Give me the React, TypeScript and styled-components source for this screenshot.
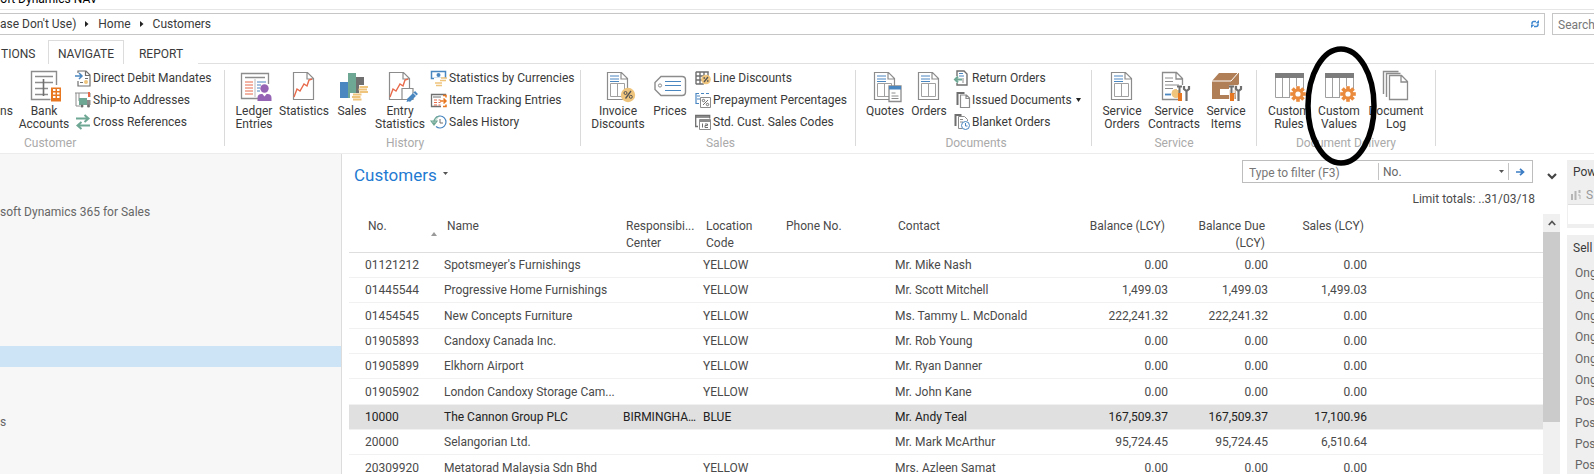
import React from "react";
import styled, { createGlobalStyle } from "styled-components";

const GlobalStyle = createGlobalStyle`
  * { box-sizing: border-box; }
  body { margin: 0; background: #fff; }
  body, button, input, select, table {
    font-family: Roboto, "Open Sans", sans-serif;
    font-size: 12px;
    line-height: 16px;
    color: #4a4a4a;
  }
  button, input, select { border: 0; padding: 0; margin: 0; background: none; outline: none; }
`;

const C = {
  gray: "#8c8c8c",
  dark: "#6f6f6f",
  blue: "#4a86c0",
  orange: "#e87722",
  gear: "#ea8a3c",
  purple: "#9564b4",
  green: "#6fa795",
  gold: "#efc47c",
  red: "#e8694a",
  brown: "#b07f58",
};

/* ---------- page frame ---------- */

const Shell = styled.div`
  height: 100vh;
  display: flex;
  flex-direction: column;
  overflow: hidden;
`;

const TitleBar = styled.header`
  flex: none;
  height: 10px;
  padding-bottom: 2px;
  display: flex;
  align-items: flex-end;
  overflow: hidden;
  border-bottom: 1px solid #e6e6e6;
  color: #000;
  text-indent: -6px;
  white-space: nowrap;
`;

const AddressRow = styled.div`
  flex: none;
  display: flex;
  gap: 7px;
  padding-top: 3px;
`;

const AddressBar = styled.nav`
  flex: 1;
  height: 22px;
  display: flex;
  align-items: center;
  gap: 9px;
  padding-right: 5px;
  border: 1px solid #c6c6c6;
  border-left: 0;
`;

const Crumb = styled.a`
  color: #3a3a3a;
  text-decoration: none;
`;

const CrumbSeparator = styled.svg`
  width: 4px;
  height: 6px;
  margin-right: 0;
`;

const IconButton = styled.button`
  display: flex;
  align-items: center;
  justify-content: center;
`;

const SearchBox = styled.input`
  width: 42px;
  height: 22px;
  padding: 2px 0 0 5px;
  border: 1px solid #c6c6c6;
  border-right: 0;
  &::placeholder { color: #777; opacity: 1; }
`;

const Spacer = styled.div`
  flex: 1;
`;

const TabStrip = styled.div`
  flex: none;
  display: flex;
  align-items: stretch;
  height: 29px;
  padding-top: 5px;
  border-bottom: 1px solid #e0e0e0;
`;

const Tab = styled.button<{ $active?: boolean; $width: number; $start?: boolean }>`
  width: ${(p) => p.$width}px;
  height: 24px;
  text-align: ${(p) => (p.$start ? "left" : "center")};
  color: #3a3a3a;
  background: #fff;
  border: 1px solid ${(p) => (p.$active ? "#dcdcdc" : "transparent")};
  border-bottom: 0;
  padding-top: 2px;
  padding-left: 0;
`;

/* ---------- ribbon ---------- */

const RibbonBar = styled.div`
  flex: none;
  display: flex;
  height: 90px;
  padding-top: 6px;
  border-bottom: 1px solid #ececec;
`;

const Group = styled.section<{ $flush?: boolean; $padEnd?: boolean }>`
  display: flex;
  flex-direction: column;
  height: 76px;
  padding-left: ${(p) => (p.$flush ? 0 : 5)}px;
  padding-right: ${(p) => (p.$padEnd ? 5 : 0)}px;
  border-right: 1px solid #dadada;
`;

const GroupBody = styled.div`
  flex: none;
  display: flex;
  height: 65px;
`;

const GroupTitle = styled.h2<{ $indent?: number }>`
  flex: none;
  margin: 0;
  line-height: 16px;
  font-size: 12px;
  font-weight: 400;
  color: #aaa;
  text-align: ${(p) => (p.$indent ? "left" : "center")};
  padding-left: ${(p) => p.$indent ?? 0}px;
`;

const BigButton = styled.button<{ $width: number }>`
  position: relative;
  width: ${(p) => p.$width}px;
  display: flex;
  flex-direction: column;
  align-items: center;
  color: #3a3a3a;
  line-height: 13px;
  white-space: pre;
  svg { flex: none; overflow: visible; }
`;

const BigLabel = styled.span`
  padding-top: 3px;
`;

const ClippedButton = styled(BigButton)`
  align-items: flex-start;
  padding-top: 35px;
`;

const SmallList = styled.div<{ $width: number }>`
  width: ${(p) => p.$width}px;
  padding-left: 5px;
  display: flex;
  flex-direction: column;
`;

const SmallButton = styled.button`
  flex: none;
  height: 22px;
  display: flex;
  align-items: flex-start;
  gap: 2px;
  color: #3a3a3a;
  line-height: 17px;
  white-space: nowrap;
  svg { flex: none; overflow: visible; }
`;

const MarkRing = styled.svg`
  position: absolute;
  left: -11px;
  top: -24px;
  z-index: 2;
  pointer-events: none;
`;

/* ---------- work area ---------- */

const WorkArea = styled.div`
  flex: 1;
  min-height: 0;
  display: flex;
`;

const Sidebar = styled.aside`
  flex: none;
  width: 342px;
  padding-top: 45px;
  background: #f7f7f7;
  border-right: 1px solid #dcdcdc;
  overflow: hidden;
`;

const NavItem = styled.a<{ $selected?: boolean }>`
  display: block;
  height: 21px;
  line-height: 26px;
  color: #666;
  text-decoration: none;
  background: ${(p) => (p.$selected ? "#cde4f7" : "none")};
`;

const Main = styled.main`
  flex: 1;
  min-width: 0;
  display: flex;
  flex-direction: column;
`;

const PageHead = styled.div`
  flex: none;
  height: 60px;
  display: flex;
  padding: 6px 10px 0 12px;
`;

const PageTitle = styled.h1`
  margin: 0;
  flex: 1;
  display: flex;
  gap: 6px;
  font-size: 17px;
  font-weight: 400;
  line-height: 30px;
  color: #1f7ad1;
  svg { margin-top: 12px; }
`;

const FilterColumn = styled.div`
  display: flex;
  flex-direction: column;
  align-items: flex-end;
`;

const FilterBox = styled.form`
  display: flex;
  align-items: stretch;
  width: 291px;
  height: 23px;
  border: 1px solid #bdbdbd;
`;

const FilterInput = styled.input`
  width: 135px;
  padding: 2px 0 0 6px;
  &::placeholder { color: #777; opacity: 1; }
`;

const FieldPicker = styled.div`
  flex: 1;
  display: flex;
  align-items: center;
  margin: 2px 0;
  border-left: 1px solid #c4c4c4;
  border-right: 1px solid #c4c4c4;
  padding-right: 4px;
`;

const FieldSelect = styled.select`
  flex: 1;
  min-width: 0;
  appearance: none;
  padding-left: 4px;
  color: #666;
`;

const GoButton = styled(IconButton)`
  width: 23px;
`;

const Totals = styled.div`
  padding-top: 8px;
  margin-right: -2px;
`;

const Collapse = styled(IconButton)`
  margin: 7px 0 0 14px;
  height: 18px;
`;

const ListArea = styled.div`
  flex: 1;
  min-height: 0;
  display: flex;
  padding: 0 7px 0 7px;
`;

const TableClip = styled.div`
  flex: 1;
  min-width: 0;
  overflow: hidden;
`;

const Grid = styled.table`
  width: 100%;
  table-layout: fixed;
  border-collapse: separate;
  border-spacing: 0;
`;

const Th = styled.th<{ $right?: boolean; $first?: boolean }>`
  height: 39px;
  vertical-align: top;
  padding: 4px ${(p) => (p.$right ? 8 : 2)}px 0 ${(p) => (p.$first ? 19 : 8)}px;
  font-weight: 400;
  line-height: 17px;
  text-align: ${(p) => (p.$right ? "right" : "left")};
  border-bottom: 1px solid #dedede;
`;

const HeadLine = styled.span`
  display: block;
  overflow: hidden;
  white-space: nowrap;
  text-overflow: ellipsis;
`;

const SortHead = styled.div`
  display: flex;
  justify-content: space-between;
  svg { margin-top: 14px; }
`;

const Row = styled.tr<{ $selected?: boolean }>`
  height: 25px;
  background: ${(p) => (p.$selected ? "#e0e0e0" : "#fff")};
  color: ${(p) => (p.$selected ? "#222" : "#4a4a4a")};
  &:nth-child(3n) { height: 26px; }
`;

const Td = styled.td<{ $right?: boolean; $first?: boolean }>`
  padding: 0 ${(p) => (p.$right ? 5 : 1)}px 0 ${(p) => (p.$first ? 16 : 5)}px;
  text-align: ${(p) => (p.$right ? "right" : "left")};
  border-bottom: 1px solid #f1f1f1;
  overflow: hidden;
  white-space: nowrap;
  text-overflow: ellipsis;
`;

const ScrollTrack = styled.div`
  flex: none;
  width: 17px;
  background: #f0f0f0;
`;

const ScrollUp = styled(IconButton)`
  width: 17px;
  height: 18px;
`;

const ScrollThumb = styled.div`
  height: 190px;
  background: #cbcbcb;
`;

const FactPane = styled.aside`
  flex: none;
  width: 27px;
  padding-top: 6px;
  display: flex;
  flex-direction: column;
  gap: 7px;
  overflow: hidden;
  white-space: nowrap;
`;

const FactBox = styled.section<{ $fill?: boolean }>`
  flex: ${(p) => (p.$fill ? 1 : "none")};
  background: #efefef;
  padding: ${(p) => (p.$fill ? 1 : 0)}px 0 4px 1px;
`;

const FactTitle = styled.h2`
  margin: 0;
  padding-left: 5px;
  font-size: 12px;
  font-weight: 400;
  line-height: 25px;
  color: #3a3a3a;
`;

const FactAction = styled.div`
  display: flex;
  align-items: center;
  gap: 5px;
  height: 19px;
  padding-left: 3px;
  color: #999;
`;

const FactBlank = styled.div`
  height: 20px;
  background: #fff;
  border-top: 1px solid #ddd;
`;

const FactList = styled.ul`
  margin: 0;
  padding: 2px 0 0 7px;
  list-style: none;
  color: #666;
`;

const FactItem = styled.li`
  height: 21px;
  line-height: 21px;
  &:nth-child(3n + 1) { height: 22px; }
`;

/* ---------- icons ---------- */

const Big = ({ children }: { children: React.ReactNode }) => (
  <svg width="32" height="32" viewBox="0 0 32 32" fill="none" aria-hidden="true">{children}</svg>
);
const Small = ({ children }: { children: React.ReactNode }) => (
  <svg width="16" height="16" viewBox="0 0 16 16" fill="none" aria-hidden="true">{children}</svg>
);

const Paper = () => (
  <path d="M5.500 2.500h14l6 6v21h-20zM19 3v6h6" stroke={C.gray} strokeWidth="1.200" fill="#fff" />
);
const OrderPaper = () => (
  <>
    <Paper />
    <path d="M8 6h9M8 9h9M8 11.500h9" stroke={C.blue} strokeWidth="1" />
    <path d="M8.500 13.500h14v13h-14zM15.500 13.500v13" stroke="#a0a0a0" />
  </>
);
const Gear = () => (
  <g transform="translate(25 24)">
    {[0, 45, 90, 135].map((a) => (
      <rect key={a} x="-1.800" y="-7.800" width="3.600" height="15.600" fill={C.gear} transform={`rotate(${a})`} />
    ))}
    <circle r="5.400" fill={C.gear} />
    <circle r="2.600" fill="#fff" />
  </g>
);
const Tools = () => (
  <g>
    <path d="M19 16h5v4h-1v4h1.500v7h-4v-7H21v-4h-2z" fill="#fff" />
    <path d="M19 16.500h5M21.500 17v6" stroke={C.dark} strokeWidth="2" />
    <path d="M20 23h4v8h-4z" fill={C.orange} />
    <path d="M26 16v3l2.500 2 2.500-2v-3M28.500 21v10" stroke={C.dark} strokeWidth="2.200" />
  </g>
);
const Coins = () => (
  <g>
    <path d="M23 15h9v9h-7v7h-11v-8h9z" fill="#fff" />
    <path d="M23.500 17h8.500M22.500 19.500h8.500M23.500 22h8.500M17 24.500h8.500M16 27h8.500M17 29.500h8.500" stroke={C.gold} strokeWidth="2" />
  </g>
);
const ChartLine = () => (
  <path d="M6 27l3-8 3 2 4-7 3 2 2-6 3-1" stroke={C.red} strokeWidth="1.400" />
);

const BankIcon = () => (
  <Big>
    <path d="M28.500 15V1.500h-25v28h19" stroke={C.gray} strokeWidth="1.400" />
    <path d="M7 6.500h18M7 12.500h18M7 18.500h13M7 24.500h13" stroke={C.gray} strokeWidth="1.600" />
    <path d="M15.500 9v17" stroke={C.dark} strokeWidth="1.600" />
    <path d="M23 17.500h10v14h-10z" fill={C.orange} />
    <path d="M25 20h2.500M29 20h2.500M25 23.500h2.500M29 23.500h2.500M25 27h2.500M29 27h2.500" stroke="#fff" strokeWidth="1.800" />
  </Big>
);
const LedgerIcon = () => (
  <Big>
    <path d="M21 28.500H3.500V3.500h27V14" stroke={C.gray} strokeWidth="1.300" />
    <path d="M7 7.500h20" stroke={C.gray} strokeWidth="1.500" />
    <path d="M7 12h8M7 15h8M7 18h8M7 21h8M7 24h8" stroke={C.red} />
    <path d="M17 9v18" stroke="#bbb" />
    <path d="M19 12h9M19 15h4M19 18h3M19 21h3" stroke={C.blue} />
    <circle cx="26.500" cy="18.500" r="4.200" fill={C.purple} />
    <path d="M19.500 31v-3q0-4 4-4h6q4 0 4 4v3z" fill={C.purple} />
    <path d="M24 23.500l2.500 3 2.500-3z" fill="#fff" />
  </Big>
);
const StatisticsIcon = () => <Big><Paper /><ChartLine /></Big>;
const SalesIcon = () => (
  <Big>
    <path d="M4 12h8v16H4z" fill={C.blue} />
    <path d="M20 7h8v16h-8z" fill={C.dark} />
    <path d="M12 3h8v25h-8z" fill={C.green} />
    <Coins />
  </Big>
);
const EntryStatisticsIcon = () => (
  <Big>
    <Paper /><ChartLine />
    <path d="M18 18.500h11v11H18z" stroke={C.gray} strokeWidth="1.200" fill="#fff" />
    <path d="M24.500 30.500l8-8" stroke={C.blue} strokeWidth="4" />
    <path d="M22.500 32l1-3.500 2.500 2.500z" fill={C.blue} />
    <path d="M29.500 23l3 3" stroke="#fff" />
  </Big>
);
const InvoiceIcon = () => (
  <Big>
    <OrderPaper />
    <circle cx="26" cy="25" r="7.200" fill={C.gold} />
    <path d="M23.500 28.500l5.500-7.500" stroke="#555" strokeWidth="1.300" />
    <circle cx="23.500" cy="23" r="1.500" stroke="#555" /><circle cx="28.800" cy="26.800" r="1.500" stroke="#555" />
  </Big>
);
const PricesIcon = () => (
  <Big>
    <path d="M7 6.500h21q3.500 0 3.500 3.500v12q0 3.500-3.500 3.500H7l-6-6v-7z" stroke={C.gray} strokeWidth="1.400" />
    <circle cx="6" cy="15.500" r="1.600" stroke={C.gray} />
    <path d="M11 11.500h16M11 15.500h16M11 20.500h16" stroke={C.blue} strokeWidth="1.200" />
  </Big>
);
const QuotesIcon = () => (
  <Big>
    <OrderPaper />
    <path d="M20 16h12v15.500H20z" fill="#fff" stroke={C.gray} strokeWidth="1.300" />
    <path d="M20 16h12v3.500H20z" fill={C.blue} />
    <path d="M22.500 23h4M22.500 26h7M22.500 28.500h7" stroke={C.gray} />
  </Big>
);
const OrdersIcon = () => <Big><OrderPaper /></Big>;
const ContractsIcon = () => (
  <Big>
    <path d="M20 29.500H4.500v-27h14l6 6V15M18 3v6h6" stroke={C.gray} strokeWidth="1.300" />
    <path d="M7 8h8M7 11.500h8M7 15h14M7 18.500h8" stroke={C.gray} />
    <path d="M7 24.500h6" stroke={C.blue} strokeWidth="1.800" />
    <circle cx="18" cy="23.500" r="4.500" fill={C.gold} />
    <Tools />
  </Big>
);
const ItemsIcon = () => (
  <Big>
    <path d="M2 11l7-8h20v11l-3 3v12H2z" fill={C.brown} />
    <path d="M2 11h19l7-8" stroke="#fff" strokeWidth="1" />
    <path d="M10 19h9v6h-9z" fill="#fff" />
    <path d="M19 15h6v8h-1v9h-5z" fill="#fff" opacity=".8" />
    <path d="M25 15h7v17h-6z" fill="#fff" opacity=".8" />
    <Tools />
  </Big>
);
const CustomIcon = () => (
  <Big>
    <path d="M2.500 7v20.500H17M9.500 7v20M16.500 7v20M23.500 7v9M30.500 7v12" stroke="#a0a0a0" strokeWidth="1" />
    <path d="M2 3h29v5H2z" fill="#7c7c7c" />
    <Gear />
  </Big>
);
const LogIcon = () => (
  <Big>
    <path d="M3.500 24V1.500h15M6.500 27V3.500h14" stroke={C.gray} strokeWidth="1.400" />
    <path d="M9.500 5.500h12l6 6v18h-18zM21 6v6h6" stroke={C.gray} strokeWidth="1.300" fill="#fff" />
  </Big>
);

const DebitIcon = () => (
  <Small>
    <path d="M3 3V1h8l4 4v11H3v-5M10.500 1v4.500H15" stroke={C.dark} strokeWidth="1.200" />
    <path d="M0 6h7M4 3l3 3-3 3" stroke={C.blue} strokeWidth="1.500" />
    <path d="M5 12.500h3M10 8.500h3" stroke={C.dark} /><circle cx="11" cy="12" r="2" fill={C.gold} />
  </Small>
);
const ShipIcon = () => (
  <Small>
    <path d="M0 1h15v4M1 1v13h4M4 1v8" stroke={C.gray} />
    <path d="M13 0h2v5h-2z" fill={C.red} />
    <path d="M4 6h8v7H4z" fill={C.green} /><path d="M12 8h3.500v5H12z" fill={C.gray} />
    <circle cx="7" cy="14" r="1.500" fill={C.dark} /><circle cx="13.500" cy="14" r="1.500" fill={C.dark} />
  </Small>
);
const CrossIcon = () => (
  <Small>
    <path d="M1 4.500h12M9.500 1l4 3.500-4 3.500M15 11.500H3M6.500 8l-4 3.500 4 3.500" stroke={C.green} strokeWidth="2" />
  </Small>
);
const CurrencyIcon = () => (
  <Small>
    <path d="M.5 1.500h14v7H.5z" stroke={C.blue} strokeWidth="1.500" />
    <circle cx="7.500" cy="5" r="2" fill={C.blue} />
    <path d="M3 8h13v8H3z" fill="#fff" />
    <path d="M10 8h6M9 10.500h6M4 13h7M5 15.500h6" stroke={C.gold} strokeWidth="1.600" />
  </Small>
);
const TrackingIcon = () => (
  <Small>
    <path d="M10 14.500H.5v-12h14v1" stroke={C.dark} strokeWidth="1.300" /><path d="M2 5h8" stroke={C.dark} />
    <path d="M3 8h3M3 10.500h3M3 13h3M7.500 8h2M7.500 10.500h2M7.500 13h2" stroke={C.red} strokeWidth="1.200" />
    <path d="M9 9h6M12.500 6.500L15 9l-2.500 2.500M12 3.500h3v2M12 14.500h3v-2" stroke={C.orange} strokeWidth="1.500" />
  </Small>
);
const HistoryIcon = () => (
  <Small>
    <path d="M5 3.500a6 6 0 1 1 0 9" stroke={C.blue} strokeWidth="1.200" />
    <path d="M8.500 2A6 6 0 0 0 3 8v2M0 7l3 4 3-4z" stroke={C.green} strokeWidth="1.200" fill={C.green} fillOpacity=".4" />
    <path d="M9 5v4h3" stroke={C.dark} />
  </Small>
);
const LineDiscountIcon = () => (
  <Small>
    <path d="M.8 2h13M.8 6h12M.8 10h6M.8 14h8M1 2v12M5 2v12M9 2v4M13 2v4" stroke={C.dark} strokeWidth="1.400" />
    <circle cx="11" cy="9.500" r="4.800" fill={C.gold} />
    <path d="M9 12l4-5M8.500 8h1.500M12 11h1.500" stroke="#555" strokeWidth="1.300" />
  </Small>
);
const PrepayIcon = () => (
  <Small>
    <path d="M4 1.500H1v10h3M6 1.500h3M11 1.500h3M2 4h3M2 7h3" stroke={C.blue} strokeWidth="1.200" />
    <path d="M5.500 5.500h10v10h-10z" stroke={C.gray} />
    <path d="M8 13l5-5" stroke={C.dark} /><circle cx="8.500" cy="8.500" r="1.200" stroke={C.dark} /><circle cx="12.500" cy="12.500" r="1.200" stroke={C.dark} />
  </Small>
);
const CodesIcon = () => (
  <Small>
    <path d="M3 12.500H.7V1.500h14v3" stroke={C.dark} strokeWidth="1.300" /><path d="M1 3h13" stroke={C.dark} strokeWidth="1.500" />
    <path d="M4.500 5.500h11v10h-11z" stroke={C.gray} fill="#fff" /><path d="M4.500 7h11" stroke={C.gray} strokeWidth="2" />
    <path d="M7.500 9.500v4M10 10h2.500v1.500H10v2h3" stroke={C.dark} />
  </Small>
);
const ReturnIcon = () => (
  <Small>
    <path d="M3 6V1h7l3 3v11H3v-2" stroke={C.dark} strokeWidth="1.400" />
    <path d="M5 3.500h4M5 6h5" stroke={C.blue} /><path d="M9 8v5" stroke={C.gray} />
    <path d="M8 9.500H1M4 6.500l-3 3 3 3" stroke={C.green} strokeWidth="2" />
  </Small>
);
const IssuedIcon = () => (
  <Small>
    <path d="M3.500 13V1h7" stroke={C.dark} strokeWidth="2" />
    <path d="M6.500 3h6l3 3v9.500h-9zM12 3v3.500h3.500" stroke={C.gray} strokeWidth="1.200" />
  </Small>
);
const BlanketIcon = () => (
  <Small>
    <path d="M1.500 12V1h6" stroke={C.dark} strokeWidth="2" />
    <path d="M4.500 2.500h6l3 3V7M8 14.500H4.500v-12M6 5.500h3M6 8h3" stroke={C.gray} />
    <circle cx="11.500" cy="11.500" r="4" stroke={C.blue} fill="#fff" /><path d="M11.500 9v3h2" stroke={C.blue} />
  </Small>
);

const CrumbArrow = () => (
  <CrumbSeparator viewBox="0 0 4 6" aria-hidden="true"><path d="M0 0l3.500 3L0 6z" fill="#222" /></CrumbSeparator>
);
const Caret = () => (
  <svg width="5" height="3" viewBox="0 0 5 3" aria-hidden="true"><path d="M0 0h5L2.500 3z" fill="#555" /></svg>
);
const MenuCaret = () => (
  <svg width="9" height="16" viewBox="0 0 9 16" aria-hidden="true"><path d="M2 6h5L4.500 10z" fill="#222" /></svg>
);

/* ---------- data ---------- */

type BigDef = { label: string; width: number; icon: React.FC; ring?: boolean };
type SmallDef = { label: string; icon: React.FC; menu?: boolean };
type GroupDef = { title: string; indent?: number; big: BigDef[]; small?: SmallDef[]; smallWidth?: number };

const groups: GroupDef[] = [
  {
    title: "Customer", indent: 24,
    big: [{ label: "Bank\nAccounts", width: 52, icon: BankIcon }],
    smallWidth: 154,
    small: [
      { label: "Direct Debit Mandates", icon: DebitIcon },
      { label: "Ship-to Addresses", icon: ShipIcon },
      { label: "Cross References", icon: CrossIcon },
    ],
  },
  {
    title: "History",
    big: [
      { label: "Ledger\nEntries", width: 48, icon: LedgerIcon },
      { label: "Statistics", width: 52, icon: StatisticsIcon },
      { label: "Sales", width: 44, icon: SalesIcon },
      { label: "Entry\nStatistics", width: 52, icon: EntryStatisticsIcon },
    ],
    smallWidth: 154,
    small: [
      { label: "Statistics by Currencies", icon: CurrencyIcon },
      { label: "Item Tracking Entries", icon: TrackingIcon },
      { label: "Sales History", icon: HistoryIcon },
    ],
  },
  {
    title: "Sales",
    big: [
      { label: "Invoice\nDiscounts", width: 64, icon: InvoiceIcon },
      { label: "Prices", width: 40, icon: PricesIcon },
    ],
    smallWidth: 165,
    small: [
      { label: "Line Discounts", icon: LineDiscountIcon },
      { label: "Prepayment Percentages", icon: PrepayIcon },
      { label: "Std. Cust. Sales Codes", icon: CodesIcon },
    ],
  },
  {
    title: "Documents",
    big: [
      { label: "Quotes", width: 48, icon: QuotesIcon },
      { label: "Orders", width: 40, icon: OrdersIcon },
    ],
    smallWidth: 142,
    small: [
      { label: "Return Orders", icon: ReturnIcon },
      { label: "Issued Documents", icon: IssuedIcon, menu: true },
      { label: "Blanket Orders", icon: BlanketIcon },
    ],
  },
  {
    title: "Service",
    big: [
      { label: "Service\nOrders", width: 50, icon: OrdersIcon },
      { label: "Service\nContracts", width: 54, icon: ContractsIcon },
      { label: "Service\nItems", width: 50, icon: ItemsIcon },
    ],
  },
  {
    title: "Document Delivery",
    big: [
      { label: "Custom\nRules", width: 54, icon: CustomIcon },
      { label: "Custom\nValues", width: 46, icon: CustomIcon, ring: true },
      { label: "Document\nLog", width: 68, icon: LogIcon },
    ],
  },
];

type Customer = { no: string; name: string; center?: string; loc?: string; contact: string; bal: string; due: string; sales: string };

const customers: Customer[] = [
  { no: "01121212", name: "Spotsmeyer's Furnishings", loc: "YELLOW", contact: "Mr. Mike Nash", bal: "0.00", due: "0.00", sales: "0.00" },
  { no: "01445544", name: "Progressive Home Furnishings", loc: "YELLOW", contact: "Mr. Scott Mitchell", bal: "1,499.03", due: "1,499.03", sales: "1,499.03" },
  { no: "01454545", name: "New Concepts Furniture", loc: "YELLOW", contact: "Ms. Tammy L. McDonald", bal: "222,241.32", due: "222,241.32", sales: "0.00" },
  { no: "01905893", name: "Candoxy Canada Inc.", loc: "YELLOW", contact: "Mr. Rob Young", bal: "0.00", due: "0.00", sales: "0.00" },
  { no: "01905899", name: "Elkhorn Airport", loc: "YELLOW", contact: "Mr. Ryan Danner", bal: "0.00", due: "0.00", sales: "0.00" },
  { no: "01905902", name: "London Candoxy Storage Cam...", loc: "YELLOW", contact: "Mr. John Kane", bal: "0.00", due: "0.00", sales: "0.00" },
  { no: "10000", name: "The Cannon Group PLC", center: "BIRMINGHA...", loc: "BLUE", contact: "Mr. Andy Teal", bal: "167,509.37", due: "167,509.37", sales: "17,100.96" },
  { no: "20000", name: "Selangorian Ltd.", contact: "Mr. Mark McArthur", bal: "95,724.45", due: "95,724.45", sales: "6,510.64" },
  { no: "20309920", name: "Metatorad Malaysia Sdn Bhd", loc: "YELLOW", contact: "Mrs. Azleen Samat", bal: "0.00", due: "0.00", sales: "0.00" },
];

const navItems = ["soft Dynamics 365 for Sales", "", "", "", "", "", "", "", "", "", "s"];
const selectedNav = 7;
const facts = ["Ong", "Ong", "Ong", "Ong", "Ong", "Ong", "Pos", "Pos", "Pos", "Pos"];

/* ---------- sections ---------- */

const RibbonGroup = ({ group }: { group: GroupDef }) => (
  <Group $flush={group.indent !== undefined} $padEnd={!group.small}>
    <GroupBody>
      {group.indent !== undefined && <ClippedButton $width={18}>ns</ClippedButton>}
      {group.big.map(({ label, width, icon: Icon, ring }) => (
        <BigButton key={label} $width={width}>
          <Icon />
          <BigLabel>{label}</BigLabel>
          {ring && (
            <MarkRing width="72" height="120" viewBox="0 0 72 120" fill="none" aria-hidden="true">
              <ellipse cx="36" cy="60" rx="33" ry="57" stroke="#000" strokeWidth="5.500" />
            </MarkRing>
          )}
        </BigButton>
      ))}
      {group.small && (
        <SmallList $width={group.smallWidth ?? 150}>
          {group.small.map(({ label, icon: Icon, menu }) => (
            <SmallButton key={label}>
              <Icon />
              <span>{label}</span>
              {menu && <MenuCaret />}
            </SmallButton>
          ))}
        </SmallList>
      )}
    </GroupBody>
    <GroupTitle $indent={group.indent}>{group.title}</GroupTitle>
  </Group>
);

const CustomerTable = () => (
  <Grid>
    <colgroup>
      <col width="90" /><col width="179" /><col width="80" /><col width="80" /><col width="112" />
      <col width="183" /><col width="100" /><col width="100" /><col width="99" /><col />
    </colgroup>
    <thead>
      <tr>
        <Th $first>
          <SortHead>
            No.
            <svg width="6" height="4" viewBox="0 0 6 4" aria-hidden="true"><path d="M0 4h6L3 0z" fill="#999" /></svg>
          </SortHead>
        </Th>
        <Th>Name</Th>
        <Th><HeadLine>Responsibi...</HeadLine><HeadLine>Center</HeadLine></Th>
        <Th>Location Code</Th>
        <Th>Phone No.</Th>
        <Th>Contact</Th>
        <Th $right>Balance (LCY)</Th>
        <Th $right>Balance Due (LCY)</Th>
        <Th $right>Sales (LCY)</Th>
        <Th />
      </tr>
    </thead>
    <tbody>
      {customers.map((c) => (
        <Row key={c.no} $selected={c.no === "10000"}>
          <Td $first>{c.no}</Td>
          <Td>{c.name}</Td>
          <Td>{c.center}</Td>
          <Td>{c.loc}</Td>
          <Td />
          <Td>{c.contact}</Td>
          <Td $right>{c.bal}</Td>
          <Td $right>{c.due}</Td>
          <Td $right>{c.sales}</Td>
          <Td />
        </Row>
      ))}
    </tbody>
  </Grid>
);

export default function App() {
  return (
    <Shell>
      <GlobalStyle />
      <TitleBar>soft Dynamics NAV</TitleBar>
      <AddressRow>
        <AddressBar aria-label="Address">
          <Crumb href="#company">ase Don't Use)</Crumb>
          <CrumbArrow />
          <Crumb href="#home">Home</Crumb>
          <CrumbArrow />
          <Crumb href="#customers">Customers</Crumb>
          <Spacer />
          <IconButton aria-label="Refresh">
            <svg width="8" height="8" viewBox="0 0 8 8" fill="none" aria-hidden="true">
              <path d="M1 4.500V3.200Q1 1.500 2.800 1.500H5M7 3.500v1.300Q7 6.500 5.200 6.500H3" stroke="#3f87cf" strokeWidth="1.500" />
              <path d="M4.500 3.200H8V0zM3.500 4.800H0V8z" fill="#3f87cf" />
            </svg>
          </IconButton>
        </AddressBar>
        <SearchBox aria-label="Search" placeholder="Search" />
      </AddressRow>
      <TabStrip role="tablist">
        <Tab role="tab" $width={48} $start>TIONS</Tab>
        <Tab role="tab" $width={76} $active aria-selected="true">NAVIGATE</Tab>
        <Tab role="tab" $width={74}>REPORT</Tab>
      </TabStrip>
      <RibbonBar>
        {groups.map((g) => <RibbonGroup key={g.title} group={g} />)}
      </RibbonBar>
      <WorkArea>
        <Sidebar>
          {navItems.map((t, i) => (
            <NavItem key={i} href="#nav" $selected={i === selectedNav}>{t}</NavItem>
          ))}
        </Sidebar>
        <Main>
          <PageHead>
            <PageTitle>Customers <Caret /></PageTitle>
            <FilterColumn>
              <FilterBox onSubmit={(e) => e.preventDefault()}>
                <FilterInput aria-label="Filter" placeholder="Type to filter (F3)" />
                <FieldPicker>
                  <FieldSelect aria-label="Filter field"><option>No.</option></FieldSelect>
                  <Caret />
                </FieldPicker>
                <GoButton aria-label="Apply filter">
                  <svg width="9" height="8" viewBox="0 0 9 8" fill="none" aria-hidden="true">
                    <path d="M0 4h7M4 .8L7.500 4 4 7.200" stroke="#3b7cc4" strokeWidth="1.700" />
                  </svg>
                </GoButton>
              </FilterBox>
              <Totals>Limit totals: ..31/03/18</Totals>
            </FilterColumn>
            <Collapse aria-label="Collapse filter pane">
              <svg width="10" height="7" viewBox="0 0 10 7" fill="none" aria-hidden="true">
                <path d="M1 1l4 4 4-4" stroke="#444" strokeWidth="2.200" />
              </svg>
            </Collapse>
          </PageHead>
          <ListArea>
            <TableClip><CustomerTable /></TableClip>
            <ScrollTrack>
              <ScrollUp aria-label="Scroll up">
                <svg width="8" height="6" viewBox="0 0 8 6" fill="none" aria-hidden="true">
                  <path d="M.8 5L4 1.500 7.200 5" stroke="#555" strokeWidth="1.800" />
                </svg>
              </ScrollUp>
              <ScrollThumb />
            </ScrollTrack>
          </ListArea>
        </Main>
        <FactPane>
          <FactBox>
            <FactTitle>Pow</FactTitle>
            <FactAction>
              <svg width="10" height="10" viewBox="0 0 10 10" fill="none" aria-hidden="true">
                <path d="M1 4v6M4.500 1v9M8.500 0v3" stroke="#b5b5b5" strokeWidth="2" />
                <path d="M7 5h2v4" stroke="#b5b5b5" />
              </svg>
              S
            </FactAction>
            <FactBlank />
          </FactBox>
          <FactBox $fill>
            <FactTitle>Sell</FactTitle>
            <FactList>
              {facts.map((f, i) => <FactItem key={i}>{f}</FactItem>)}
            </FactList>
          </FactBox>
        </FactPane>
      </WorkArea>
    </Shell>
  );
}
